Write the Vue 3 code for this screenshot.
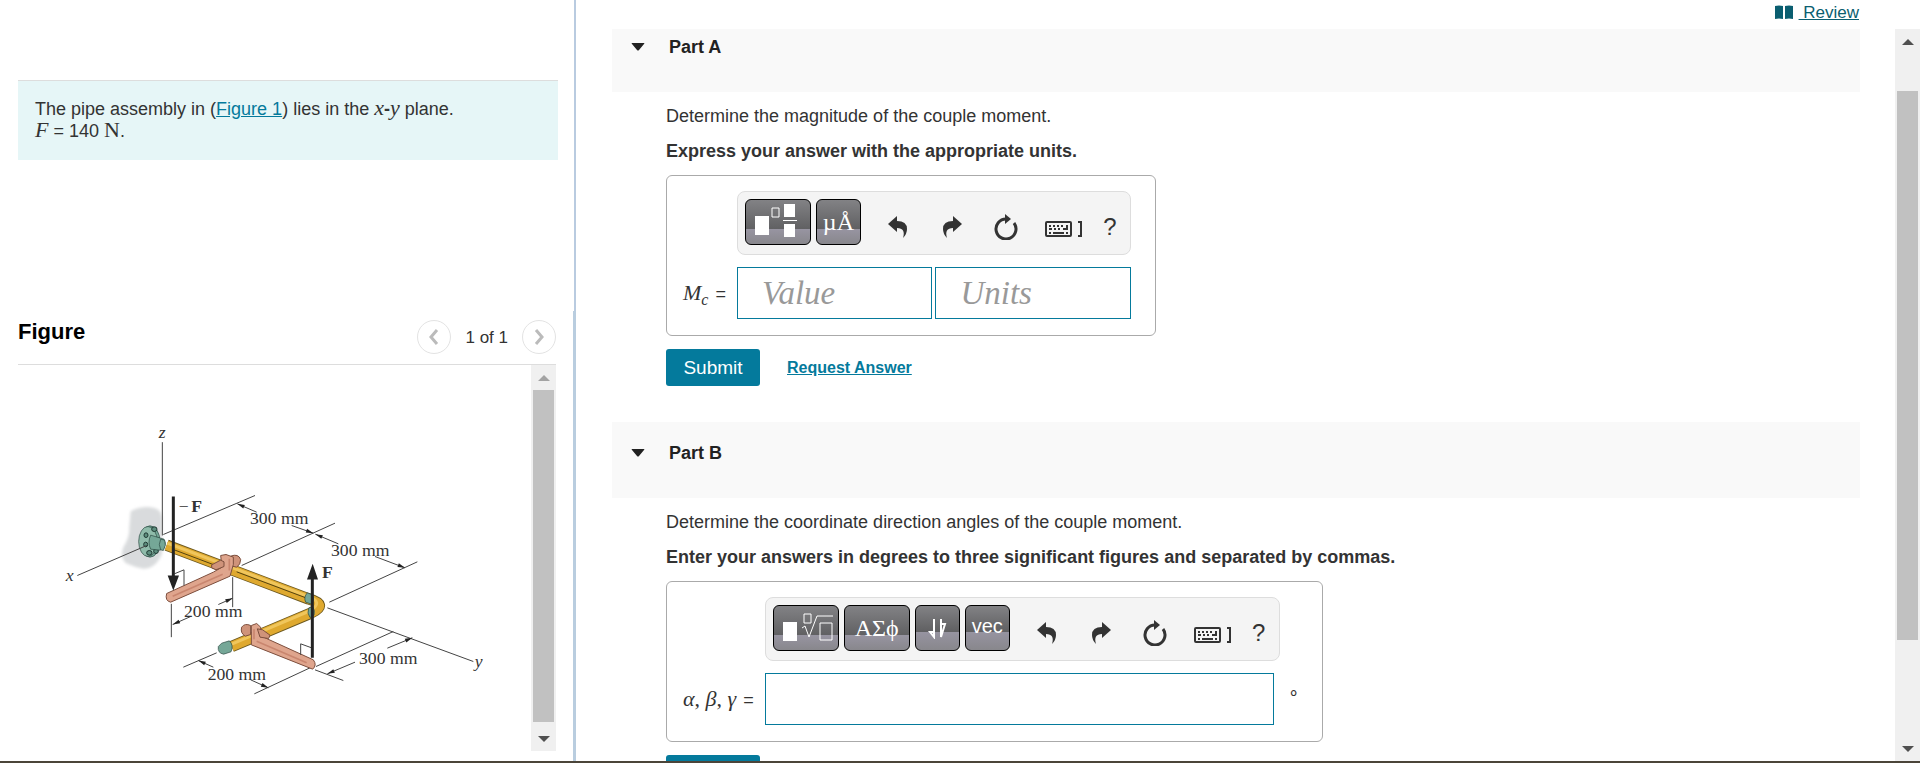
<template>
  <div class="page">
    <div class="columns">
      <aside class="left">
        <div class="intro-area">
          <div class="intro">
            The pipe assembly in (<a href="#figure">Figure 1</a>) lies in the
            <i class="math">x</i><b>-</b><i class="math">y</i> plane.<br />
            <i class="math">F</i> = 140 <span class="math">N</span>.
          </div>
        </div>

        <section id="figure" class="figure-area">
          <div class="figure-header">
            <h2>Figure</h2>
            <div class="pager">
              <button type="button" class="round" aria-label="Previous figure">
                <svg width="10" height="16" viewBox="0 0 10 16"><path d="M8 1 2 8l6 7" /></svg>
              </button>
              <span>1 of 1</span>
              <button type="button" class="round" aria-label="Next figure">
                <svg width="10" height="16" viewBox="0 0 10 16"><path d="m2 1 6 7-6 7" /></svg>
              </button>
            </div>
          </div>
          <div class="figure-body">
            <svg class="drawing" viewBox="-66 -135 1539 1155" role="img" aria-label="Pipe assembly">
              <defs>
                <filter id="rough" x="-20%" y="-20%" width="140%" height="140%">
                  <feGaussianBlur stdDeviation="5" />
                </filter>
              </defs>
              <path
                class="wall"
                filter="url(#rough)"
                d="M272 302 Q300 288 330 290 Q364 292 366 320 L366 430 Q348 474 310 475 Q285 470 258 458 Q238 440 250 410 Q270 380 268 350 Z"
              />

              <!-- axes and extension lines -->
              <g class="thin">
                <path d="M367 95V375M370 372 645 255M605 465 885 338M868 575 1132 454M862 592 1300 753" />
                <path d="M828 768 1060 663M825 778 910 810M825 765 643 850M430 770 530 727" />
                <path d="M394 580V680M578 500V590" />
                <path v-for="(d, i) in dims" :key="i" :d="d.line" />
              </g>
              <path
                v-for="(d, i) in dims"
                :key="'h' + i"
                class="head"
                d="M0 0-22 6-22-6Z"
                :transform="`translate(${d.x} ${d.y}) rotate(${d.angle})`"
              />

              <!-- flange -->
              <ellipse class="green" cx="330" cy="393" rx="30" ry="47" />
              <ellipse class="green light" cx="324" cy="393" rx="28" ry="45" />
              <g class="bolts">
                <ellipse cx="343" cy="356" rx="8" ry="7" />
                <ellipse cx="318" cy="374" rx="6" ry="7" />
                <ellipse cx="317" cy="402" rx="6" ry="7" />
                <ellipse cx="328" cy="427" rx="8" ry="7" />
                <ellipse cx="348" cy="422" rx="7" ry="7" />
              </g>
              <path class="green" d="M332 374Q322 396 332 416L360 419 372 412Q380 398 372 386Z" />
              <path class="thin" d="M320 405 112 495" />

              <!-- pipes -->
              <g class="pipe">
                <path class="edge" d="M380 404 805 565Q868 582 812 608L575 708" />
                <path class="gold" d="M380 404 805 565Q868 582 812 608L575 708" />
                <path class="shine" d="M382 398 808 559Q850 575 812 600L575 701" />
              </g>
              <path class="seam" d="M400 417 530 466M590 484 795 561" />
              <path class="green" d="M362 386Q354 402 362 418L370 420Q380 404 374 389Z" />
              <path class="green" d="M802 547Q790 560 797 575L815 581Q824 566 818 553Z" />
              <path class="green" d="M806 593Q800 608 810 621L822 614Q826 600 818 587Z" />
              <path class="green" d="M545 698 568 691Q582 704 573 724L551 731Q532 728 535 708Z" />

              <!-- levers -->
              <path class="salmon dark" d="M572 437Q595 428 602 447Q602 462 590 470L572 466Z" />
              <path class="salmon" d="M542 435 558 432 580 440V462L570 497 392 575Q374 571 380 549L520 485 546 470Z" />
              <path class="salmon dark" d="M515 463 542 449 552 454V468L528 478 515 472Z" />
              <path class="glint" d="M398 557 548 491M568 445V480" />
              <path class="salmon dark" d="M605 650Q614 637 632 645V672L616 677Q600 668 605 650Z" />
              <path class="salmon" d="M634 645 650 639 662 650V676L820 748Q832 764 818 776L634 703Z" />
              <path class="salmon dark" d="M652 655 668 658 690 674 686 684 660 680Z" />
              <path class="glint" d="M650 692 800 757M642 656V686" />

              <path class="thin" d="M403 490 432 478V525M782 733V700L815 712" />

              <!-- forces -->
              <path class="force" d="M400 258V500M817 742V505" />
              <path class="head" d="M383 495H417L400 540ZM801 507H834L818 460Z" />

              <g class="dim-text">
                <text x="630" y="340">300 mm</text>
                <text x="873" y="436">300 mm</text>
                <text x="432" y="618">200 mm</text>
                <text x="503" y="808">200 mm</text>
                <text x="957" y="759">300 mm</text>
                <text x="356" y="81" class="it">z</text>
                <text x="77" y="512" class="it">x</text>
                <text x="1304" y="768" class="it">y</text>
                <text x="416" y="303">−<tspan class="bold" dx="8">F</tspan></text>
                <text x="846" y="503" class="bold">F</text>
              </g>
            </svg>
            <div class="scrollbar" aria-hidden="true">
              <span class="tri up faded"></span>
              <span class="thumb figure-thumb"></span>
              <span class="tri down"></span>
            </div>
          </div>
        </section>
      </aside>

      <main class="right">
        <div class="review">
          <svg width="18" height="14" viewBox="0 0 18 14">
            <path d="M0 1Q4 0 8 1V14Q4 13 0 14ZM10 1Q14 0 18 1V14Q14 13 10 14Z" />
          </svg>
          <a href="#review">&nbsp;Review</a>
        </div>

        <div class="scroll-row">
          <div class="parts">
            <section v-for="part in parts" :key="part.id" class="part">
              <header class="part-header" :class="{ cut: part.id === 'A' }">
                <button type="button" class="caret" :aria-label="'Collapse Part ' + part.id">
                  <svg width="14" height="8" viewBox="0 0 14 8"><path d="M1 0H13Q14 0 13 1L8 7Q7 8 6 7L1 1Q0 0 1 0Z" /></svg>
                </button>
                <h3>Part {{ part.id }}</h3>
              </header>
              <div class="part-body">
                <p>{{ part.question }}</p>
                <p class="bold-line">{{ part.instruction }}</p>

                <div class="answer">
                  <div class="toolbar">
                    <template v-if="part.id === 'A'">
                      <button type="button" class="key wide" aria-label="Templates">
                        <svg width="64" height="44" viewBox="0 0 64 44">
                          <path class="solid" d="M9 16H23V35H9ZM38 4H49V17H38ZM38 24H49V37H38ZM37 20H51V21H37Z" />
                          <path class="line" d="M26 8H33V17H26Z" />
                        </svg>
                      </button>
                      <button type="button" class="key serif">µÅ</button>
                    </template>
                    <template v-else>
                      <button type="button" class="key wide" aria-label="Templates">
                        <svg width="64" height="44" viewBox="0 0 64 44">
                          <path class="solid" d="M9 16H23V35H9Z" />
                          <path class="line" d="M30 8H37V17H30ZM46 17H58V34H46ZM28 22 31 20 35 31 43 10H59" />
                        </svg>
                      </button>
                      <button type="button" class="key wide serif">ΑΣϕ</button>
                      <button type="button" class="key even" aria-label="Arrows">
                        <svg width="20" height="22" viewBox="0 0 20 22">
                          <path class="line" d="M7 2V20M3 15 7 20V15ZM14 20V2V7L18 7Z" />
                        </svg>
                      </button>
                      <button type="button" class="key even sans">vec</button>
                    </template>

                    <div class="tools">
                      <button type="button" aria-label="Undo">
                        <svg width="20" height="22" viewBox="0 0 20 22">
                          <path d="M0 8 9 0V5Q19 5 19 13Q19 18 15 22Q18 12 9 12V16Z" />
                        </svg>
                      </button>
                      <button type="button" aria-label="Redo">
                        <svg width="20" height="22" viewBox="0 0 20 22">
                          <path d="M20 8 11 0V5Q1 5 1 13Q1 18 5 22Q2 12 11 12V16Z" />
                        </svg>
                      </button>
                      <button type="button" aria-label="Reset">
                        <svg width="24" height="26" viewBox="0 0 24 26">
                          <path class="ring" d="M20 9A10 10 0 1 1 12 5" />
                          <path d="M11 0 17 5 11 10Z" />
                        </svg>
                      </button>
                      <button type="button" class="kb" aria-label="Keyboard shortcuts">
                        <svg width="38" height="18" viewBox="0 0 38 18">
                          <rect class="frame" x="1" y="2" width="25" height="14" rx="1" />
                          <path d="M4 5h2v2H4zM8 5h2v2H8zM12 5h2v2h-2zM16 5h2v2h-2zM21 5h2v5h-5v-2h3zM4 8h3v2H4zM9 8h2v2H9zM13 8h2v2h-2zM4 12h2v2H4zM8 12h11v2H8zM21 12h2v2h-2z" />
                          <path class="frame" d="M33 2h3v14h-3" />
                        </svg>
                      </button>
                      <button type="button" class="help" aria-label="Help">?</button>
                    </div>
                  </div>

                  <label class="symbol" :for="'answer-' + part.id">
                    <template v-if="part.id === 'A'"><i>M<sub>c</sub></i></template>
                    <template v-else><i>α</i>, <i>β</i>, <i>γ</i></template>
                    <span class="eq">=</span>
                  </label>

                  <div class="fields" :class="{ single: part.id === 'B' }">
                    <input :id="'answer-' + part.id" v-model="part.value" type="text" :placeholder="part.placeholder" />
                    <input v-if="part.id === 'A'" v-model="units" type="text" placeholder="Units" aria-label="Units" />
                  </div>
                  <span v-if="part.id === 'B'" class="degree">∘</span>
                </div>

                <div class="actions">
                  <button type="button" class="submit">Submit</button>
                  <a href="#request">Request Answer</a>
                </div>
              </div>
            </section>
          </div>
          <div class="scrollbar" aria-hidden="true">
            <span class="tri up"></span>
            <span class="thumb main-thumb"></span>
            <span class="tri down"></span>
          </div>
        </div>
      </main>
    </div>
  </div>
</template>

<script setup>
import { reactive, ref } from 'vue'

const units = ref('')

const parts = reactive([
  {
    id: 'A',
    question: 'Determine the magnitude of the couple moment.',
    instruction: 'Express your answer with the appropriate units.',
    placeholder: 'Value',
    value: '',
  },
  {
    id: 'B',
    question: 'Determine the coordinate direction angles of the couple moment.',
    instruction: 'Enter your answers in degrees to three significant figures and separated by commas.',
    placeholder: '',
    value: '',
  },
])

// dimension lines, each with an arrowhead at its second point
const segments = [
  [650, 305, 592, 280],
  [755, 345, 820, 368],
  [895, 400, 826, 371],
  [1005, 438, 1095, 472],
  [1042, 713, 1117, 682],
  [945, 755, 862, 790],
  [520, 770, 475, 750],
  [632, 808, 685, 832],
  [535, 582, 578, 563],
  [452, 618, 398, 642],
]

const dims = segments.map(([x1, y1, x2, y2]) => ({
  line: `M${x1} ${y1} ${x2} ${y2}`,
  x: x2,
  y: y2,
  angle: (Math.atan2(y2 - y1, x2 - x1) * 180) / Math.PI,
}))
</script>

<style>
body {
  margin: 0;
}
</style>

<style scoped>
.page {
  height: 100vh;
  box-sizing: border-box;
  border-bottom: 2px solid #4b4539;
  overflow: hidden;
  background: #fff;
  color: #333;
  font-family: "Liberation Sans", Arial, sans-serif;
  font-size: 18px;
  line-height: 22px;
}

.columns {
  display: flex;
  height: 100%;
}

h2, h3, p { margin: 0; }

button {
  font-family: inherit;
  padding: 0;
  border: none;
  background: none;
  cursor: pointer;
}

svg { display: block; }

a { color: #047a9c; }

/* left column */
.left {
  flex: 0 0 30%;
  display: flex;
  flex-direction: column;
}

.intro-area {
  height: 311px;
  padding: 80px 16px 0 18px;
  box-sizing: border-box;
  border-right: 2px solid #b9cbe0;
}

.intro {
  padding: 17px 17px 18px;
  border-top: 1px solid #ddd;
  background: #e6f6f7;
}

.math {
  font-family: "Liberation Serif", serif;
  font-size: 22px;
  line-height: 0;
}

.figure-area {
  flex: 1;
  min-height: 0;
  display: flex;
  flex-direction: column;
  padding: 0 17px 10px 18px;
  border-right: 3px solid #b9cddf;
}

.figure-header {
  display: flex;
  justify-content: space-between;
  height: 53px;
  border-bottom: 1px solid #ddd;
}

h2 {
  padding-top: 10px;
  font-size: 22px;
  color: #000;
}

.pager {
  display: flex;
  align-items: center;
  gap: 14px;
  height: 52px;
  font-size: 17px;
}

.pager span { padding-top: 2px; }

.round {
  display: flex;
  align-items: center;
  justify-content: center;
  width: 34px;
  height: 34px;
  box-sizing: border-box;
  border: 1px solid #e3e3e3;
  border-radius: 50%;
}

.round path {
  fill: none;
  stroke: #bbb;
  stroke-width: 3;
}

.figure-body {
  flex: 1;
  min-height: 0;
  display: flex;
}

.drawing {
  flex: 1;
  min-width: 0;
  height: 100%;
}

.wall { fill: #d9dbdd; }
.thin { fill: none; stroke: #444; stroke-width: 3; }
.head { fill: #222; }
.force { stroke: #222; stroke-width: 9; }
.green { fill: #75a797; stroke: #26443c; stroke-width: 2; }
.green.light { fill: #8fbbaa; }
.bolts { fill: #5c8d7d; stroke: #1f3832; stroke-width: 3; }
.pipe path { fill: none; stroke-linejoin: round; }
.pipe .edge { stroke: #6b581f; stroke-width: 34; }
.pipe .gold { stroke: #dfa92f; stroke-width: 29; }
.pipe .shine { stroke: #f0c65c; stroke-width: 9; }
.seam { fill: none; stroke: #54430f; stroke-width: 3; }
.salmon { fill: #dfa58d; stroke: #7d4f3e; stroke-width: 3; stroke-linejoin: round; }
.salmon.dark { fill: #cf937a; }
.glint { fill: none; stroke: #c9866f; stroke-width: 5; }

.dim-text {
  fill: #333;
  font-family: "Liberation Serif", serif;
  font-size: 53px;
}

.dim-text .it { font-style: italic; }
.dim-text .bold { font-weight: bold; }

/* scrollbars */
.scrollbar {
  display: flex;
  flex-direction: column;
  align-items: center;
  width: 25px;
  background: #f0f0f0;
}

.tri {
  width: 0;
  border: 6px solid transparent;
}

.tri.up {
  margin-top: 4px;
  border-bottom-color: #505050;
}

.tri.up.faded { border-bottom-color: #a3a3a3; }

.tri.down {
  margin: auto 0 3px;
  border-top-color: #505050;
}

.thumb {
  width: 21px;
  background: #c1c1c1;
}

.figure-thumb {
  height: 86%;
  margin-top: 9px;
}

.main-thumb {
  height: 75%;
  margin-top: 46px;
}

/* right column */
.right {
  flex: 1;
  min-width: 0;
  display: flex;
  flex-direction: column;
  padding-left: 36px;
}

.review {
  display: flex;
  justify-content: flex-end;
  gap: 6px;
  height: 27px;
  padding: 2px 61px 0 0;
  font-size: 17px;
}

.review svg { margin-top: 3px; }
.review path { fill: #0a5e70; }
.review a { color: #0a5e70; }

.scroll-row {
  flex: 1;
  min-height: 0;
  display: flex;
  justify-content: space-between;
  gap: 35px;
}

.parts {
  flex: 1;
  overflow: hidden;
}

.part-header {
  display: flex;
  gap: 24px;
  height: 56px;
  padding: 20px 19px 0;
  background: #f9f9f9;
}

.part-header.cut { padding-top: 7px; }

.caret {
  height: 22px;
}

.caret path { fill: #222; }

h3 {
  font-size: 18px;
  color: #222;
}

.part-body {
  padding: 13px 0 36px 54px;
}

.part-body p { margin-bottom: 13px; }
.bold-line { font-weight: bold; }

.answer {
  display: grid;
  grid-template-columns: auto auto auto;
  row-gap: 12px;
  width: fit-content;
  padding: 15px 24px 16px 16px;
  border: 1px solid #aaa;
  border-radius: 6px;
}

.toolbar {
  grid-column: 2;
  display: flex;
  gap: 5px;
  padding: 7px 5px 9px 7px;
  border: 1px solid #ddd;
  border-radius: 8px;
  background: #f4f4f4;
}

.key {
  display: flex;
  align-items: center;
  justify-content: center;
  width: 45px;
  height: 46px;
  box-sizing: border-box;
  border: 1px solid #000;
  border-radius: 6px;
  background: linear-gradient(#828285, #606062 67%, #9794a1 67%, #88878c);
  color: #fff;
}

.key.wide { width: 66px; }
.key.even { background: linear-gradient(#828285, #606062 58%, #9794a1 58%, #88878c); }
.key.serif { font: 24px "Liberation Serif", serif; }
.key.sans { font-size: 20px; padding-bottom: 4px; }
.solid { fill: #fff; }
.line { fill: none; stroke: #fff; stroke-width: 1; }
.even .line { stroke-width: 2; }

.tools {
  display: flex;
  margin-left: 5px;
  padding-top: 10px;
}

.tools button {
  display: flex;
  align-items: center;
  justify-content: center;
  width: 54px;
  height: 36px;
  color: #333;
}

.tools svg { fill: #333; }
.tools .kb { width: 62px; }
.tools .kb svg { margin-top: 4px; }
.tools .help { width: 30px; font-size: 24px; }
.tools .ring { fill: none; stroke: #333; stroke-width: 3; }
.tools .frame { fill: none; stroke: #333; stroke-width: 2; }

.symbol {
  grid-column: 1;
  align-self: center;
  padding-right: 11px;
  font-family: "Liberation Serif", serif;
  font-size: 22px;
}

.symbol sub {
  font-size: 16px;
  line-height: 0;
}

.eq {
  margin-left: 7px;
  font-family: "Liberation Sans", sans-serif;
  font-size: 18px;
}

.fields {
  display: flex;
  gap: 3px;
}

.fields.single { margin-right: 6px; }

.fields input {
  flex: 1;
  width: 0;
  height: 52px;
  box-sizing: border-box;
  padding: 0 24px;
  border: 1px solid #047a9c;
  outline: none;
  font: italic 33px "Liberation Serif", serif;
}

.fields input::placeholder {
  color: #999;
  opacity: 1;
}

.degree {
  width: 18px;
  padding: 8px 0 0 8px;
  box-sizing: border-box;
}

.actions {
  display: flex;
  align-items: center;
  gap: 27px;
  margin-top: 13px;
}

.submit {
  width: 94px;
  height: 37px;
  border-radius: 3px;
  background: #047a9c;
  color: #fff;
  font-size: 19px;
}

.actions a {
  font-size: 16px;
  font-weight: bold;
}
</style>
